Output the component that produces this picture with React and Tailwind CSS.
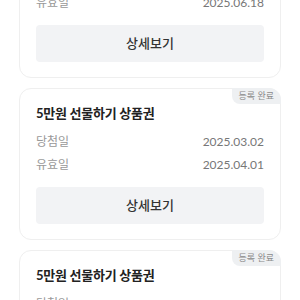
const coupons = [
    { title: "5만원 선물하기 상품권", won: "2025.05.19", valid: "2025.06.18" },
    { title: "5만원 선물하기 상품권", won: "2025.03.02", valid: "2025.04.01" },
    { title: "5만원 선물하기 상품권", won: "2025.03.02", valid: "2025.04.01" },
];

const CouponCard = ({ coupon }) => (
    <div className="relative rounded-xl border border-[#efefef] bg-white px-4 pt-[14px] pb-[15px]">
        <span className="absolute top-[-1px] right-[-1px] rounded-tr-xl rounded-bl-lg bg-[#eef0f2] px-[7px] h-[16px] flex items-center text-[9px] text-[#8a8a8a]">
            등록 완료
        </span>
        <h3 className="text-[13px] leading-5 font-bold text-[#222] tracking-[-0.02em]">{coupon.title}</h3>
        <div className="mt-[9px] flex flex-col gap-[3px] text-[12px] leading-5">
            <div className="flex justify-between">
                <span className="text-[#999]">당첨일</span>
                <span className="text-[#777]">{coupon.won}</span>
            </div>
            <div className="flex justify-between">
                <span className="text-[#999]">유효일</span>
                <span className="text-[#777]">{coupon.valid}</span>
            </div>
        </div>
        <button className="mt-3 w-full h-[37px] rounded bg-[#f2f3f5] text-[13px] font-medium text-[#333]">
            상세보기
        </button>
    </div>
);

const App = () => {
    return (
        <div className="h-[300px] overflow-hidden bg-white font-['Lato','Noto_Sans_CJK_KR',sans-serif]">
            <div className="mt-[-74px] px-[19px] flex flex-col gap-[10px]">
                {coupons.map((c, i) => (
                    <CouponCard key={i} coupon={c} />
                ))}
            </div>
        </div>
    );
};

export default App;
